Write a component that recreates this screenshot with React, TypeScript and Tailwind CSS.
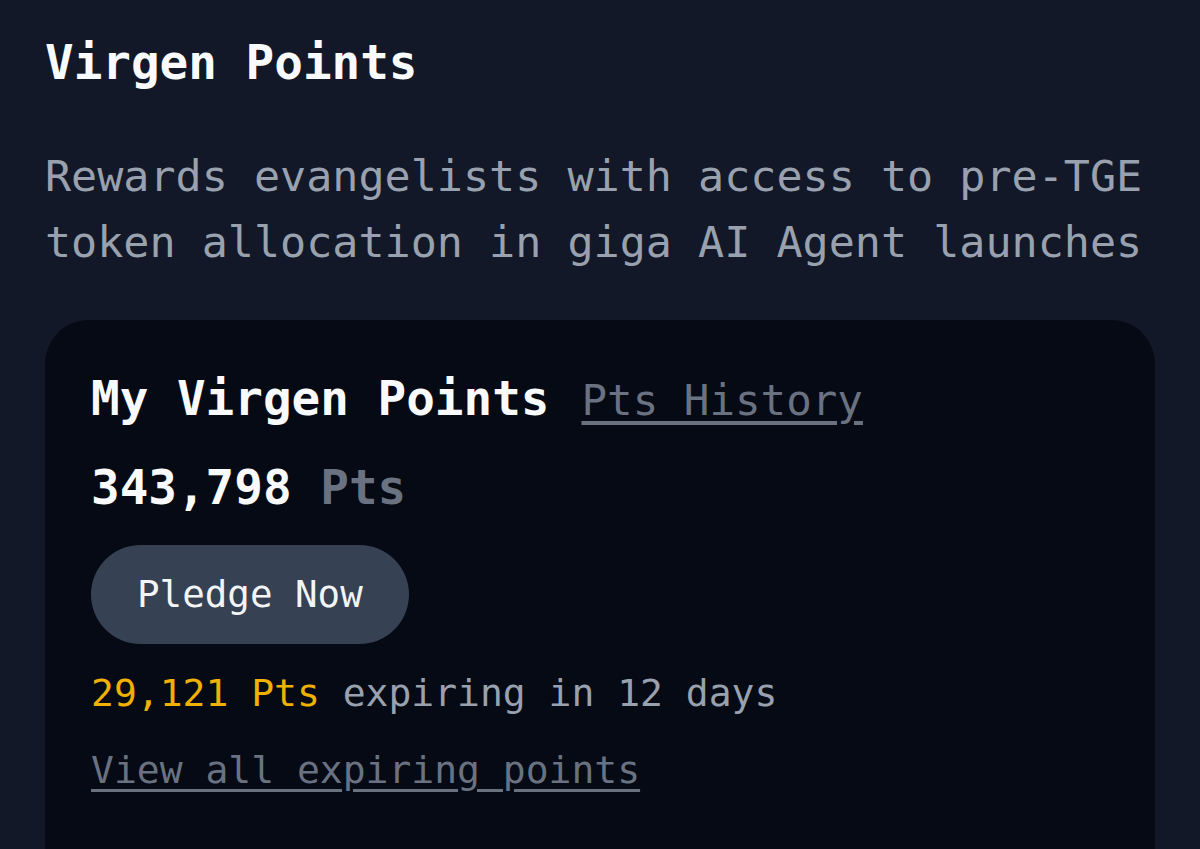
export default function App() {
  return (
    <div
      className="h-[849px] overflow-hidden bg-[#121827] px-[45px] pt-[28px]"
      style={{ fontFamily: '"DejaVu Sans Mono", "Liberation Mono", monospace' }}
    >
      <h1 className="text-[47.6px] leading-[70px] font-bold text-gray-50">Virgen Points</h1>
      <p className="mt-[45px] text-[43.4px] leading-[66px] text-gray-400">
        Rewards evangelists with access to pre-TGE token allocation in giga AI Agent launches
      </p>

      <div className="mt-[45px] h-[600px] rounded-[44px] bg-[#050a14] px-[46px] pt-[44px]">
        <div className="flex items-baseline gap-[32px]">
          <h2 className="text-[47.6px] leading-[70px] font-bold text-gray-50">My Virgen Points</h2>
          <a href="#" className="text-[42.5px] text-gray-500 underline underline-offset-[6px]">
            Pts History
          </a>
        </div>

        <div className="mt-[19px] text-[47.6px] leading-[70px] font-bold text-gray-50">
          343,798 <span className="text-gray-500">Pts</span>
        </div>

        <button className="mt-[22px] h-[99px] rounded-full bg-gray-700 px-[46px] text-[37.5px] text-gray-100">
          Pledge Now
        </button>

        <div className="mt-[21px] text-[38px] leading-[57px] text-gray-400">
          <span className="text-yellow-500">29,121 Pts</span> expiring in 12 days
        </div>

        <a
          href="#"
          className="mt-[20px] block w-fit text-[38px] leading-[57px] text-gray-500 underline underline-offset-[6px]"
        >
          View all expiring points
        </a>
      </div>
    </div>
  );
}
